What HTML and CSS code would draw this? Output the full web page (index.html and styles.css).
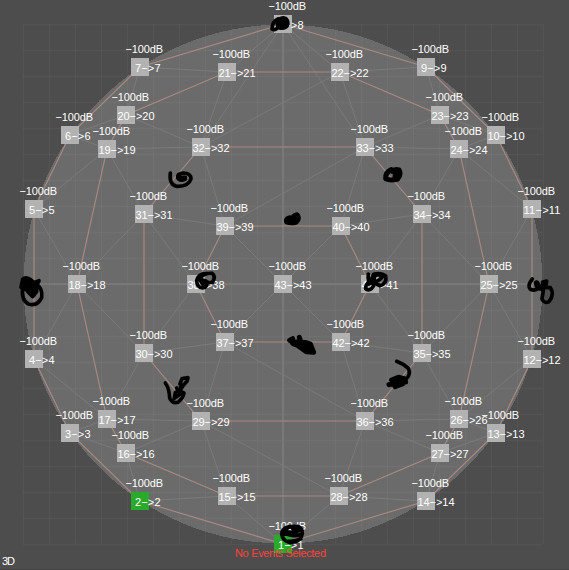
FILE: index.html
```html
<!DOCTYPE html>
<html lang="en">
<head>
<meta charset="utf-8">
<title>Speaker layout</title>
<link rel="stylesheet" href="styles.css">
</head>
<body>
<svg class="stage" width="569" height="570" viewBox="0 0 569 570">
  <circle class="dome" cx="283" cy="284" r="259.5"/>
  <g id="grid" class="grid"></g>
  <path class="axis" d="M283 24V544M23 284H543"/>
  <path id="mesh" class="mesh"/>
  <path id="rings" class="rings"/>
  <g id="nodes"></g>
  <g class="ink">
    <g transform="translate(190 0) scale(.3333)">
      <path d="M264 57Q247 65 246 87Q256 93 266 80Q270 64 259 61"/>
      <path class="solid" d="M265 60Q275 50 287 55Q297 65 292 77Q284 87 270 84Q256 78 265 60Z"/>
    </g>
    <g transform="scale(.3333)">
      <path d="M511 519Q507 555 530 559Q566 560 573 537Q573 519 549 519Q531 521 533 533Q539 545 556 537M540 532L556 532"/>
    </g>
    <g transform="translate(369 0) scale(.3333)">
      <path class="wide" d="M67 509Q49 517 50 536Q65 543 86 537Q98 521 90 510Q76 506 70 514M80 514L78 534L90 520"/>
    </g>
    <g transform="translate(0 190) scale(.3333)">
      <path class="solid" d="M68 268Q77 260 90 268L103 278L117 272L110 287L110 305L98 320L88 310L80 300L63 292Z"/>
      <path d="M69 290Q62 330 85 342Q112 350 125 323Q129 297 111 284"/>
    </g>
    <g transform="translate(190 190) scale(.3333)">
      <path class="wide" d="M300 83Q286 86 290 96Q303 101 319 96Q330 83 321 74Q308 77 308 89Q314 93 319 86"/>
      <path d="M52 251Q25 249 20 273Q21 293 38 294Q55 291 49 274L35 269Q47 281 67 277Q79 260 66 250Q42 248 28 267L39 284"/>
      <path d="M535 252Q532 276 544 277Q568 274 577 260Q563 249 553 260Q548 279 570 287Q592 281 587 258Q574 247 551 253L543 270Q526 282 527 296Q541 306 551 287Q550 276 536 282"/>
      <path class="wide" d="M299 451L308 446Q300 462 321 465L349 485L371 487L361 462Q342 455 331 458L354 474L365 475M328 442L333 456L312 455M323 464L351 479"/>
    </g>
    <g transform="translate(369 190) scale(.3333)">
      <path d="M490 267Q474 287 484 298Q503 305 510 289Q506 272 500 278Q501 296 518 298Q533 292 533 273L521 276L520 293L544 293Q558 313 540 335Q526 342 519 327L523 302"/>
      <path d="M83 514Q104 522 118 535Q127 552 111 568"/>
      <path class="wide" d="M68 570L88 562L106 566M60 584L88 576L110 576M78 590L100 582"/>
    </g>
    <g transform="translate(0 380) scale(.3333)">
      <path d="M496 9Q508 25 509 54Q517 72 534 67Q550 53 552 39L539 34L550 16L561 4L564 -7L546 -4L540 12L544 24L526 38L523 55L540 43L530 24"/>
    </g>
    <g transform="translate(190 380) scale(.3333)">
      <path d="M315 439Q278 438 275 462Q278 484 302 488Q334 486 337 461Q337 437 314 438Q288 440 287 454Q306 463 326 452Q328 444 308 446M276 463L290 462Q316 472 336 462M333 476Q312 486 294 484"/>
    </g>
  </g>
  <text class="warning" x="235" y="557" textLength="91">No Events Selected</text>
  <text class="label" x="2" y="565" textLength="13">3D</text>
  <path class="edge" d="M0 569.5H569"/>
</svg>
<script src="script.js"></script>
</body>
</html>
```
FILE: styles.css
```css
body {
  margin: 0;
  background: #4d4d4d;
  overflow: hidden;
}

.stage {
  display: block;
  font: 11px "Liberation Sans", Arial, sans-serif;
}

.dome {
  fill: #6b6b6b;
  shape-rendering: crispEdges;
}

.grid {
  stroke: #fff;
  stroke-opacity: .035;
  stroke-width: 1.3;
}

.axis {
  stroke: #7b7b7b;
  stroke-width: 1.7;
}

.mesh {
  fill: none;
  stroke: #7c7c7c;
  stroke-width: .9;
}

.rings {
  fill: none;
  stroke: #a98a80;
  stroke-width: 1.15;
}

.node {
  fill: #b2b2b2;
  shape-rendering: crispEdges;
}

.node.active {
  fill: #2aaa2a;
}

.label {
  fill: #fff;
}

.warning {
  fill: #ff4338;
}

.ink {
  fill: none;
  stroke: #000;
  stroke-width: 11;
  stroke-linecap: round;
  stroke-linejoin: round;
}

.ink .wide {
  stroke-width: 15;
}

.ink .solid {
  fill: #000;
}

.edge {
  stroke: #444;
}
```
FILE: script.js
```javascript
// Speaker positions, indexed by channel number minus one.
const speakers = [
  [283,544],[140,501],[70,433],[34,359],[34,209],[70,135],[140,67],[283,24],
  [426,67],[496,135],[532,209],[532,359],[496,433],[426,501],
  [227,496],[126,453],[107,419],[77,284],[107,149],[126,115],[227,72],
  [340,72],[440,115],[459,149],[489,284],[459,419],[440,453],[339,496],
  [201,421],[144,353],[144,214],[201,147],[365,147],[422,214],[422,353],[365,421],
  [225,342],[196,284],[225,226],[341,226],[370,284],[341,342],[283,284]
];
const rings = [[1,14],[15,28],[29,36],[37,42]];
const mesh = `8-21 8-22 8-32 8-33 7-21 9-22 7-20 9-23 6-20 10-23 6-19 10-24
  20-32 23-33 19-32 24-33 21-32 22-33 22-32 5-19 11-24 19-31 24-34 5-18 11-25
  18-31 25-34 18-30 25-35 4-18 12-25 31-39 34-40 31-38 34-41 30-38 35-41
  30-37 35-42 32-39 33-39 33-40 39-43 40-43 37-43 42-43 29-37 36-37 36-42
  28-29 15-29 28-36 1-15 1-28 2-15 14-28 2-16 14-27 3-16 13-27 3-17 13-26
  17-29 26-36 16-29 27-36 17-30 26-35 4-17 12-26`;

const svg = (name, attrs, text) => {
  const el = document.createElementNS("http://www.w3.org/2000/svg", name);
  for (const key in attrs) el.setAttribute(key, attrs[key]);
  if (text) el.textContent = text;
  return el;
};
const at = n => speakers[n - 1].join(" ");

const grid = document.getElementById("grid");
for (let i = 0; i <= 20; i++) {
  grid.append(svg("path", { d: `M${23.5 + i * 26} 24V544M23 ${24.5 + i * 26}H543` }));
}

document.getElementById("mesh").setAttribute("d",
  mesh.trim().split(/\s+/).map(pair => {
    const [a, b] = pair.split("-");
    return `M${at(a)}L${at(b)}`;
  }).join(""));

document.getElementById("rings").setAttribute("d",
  rings.map(([first, last]) => {
    let d = `M${at(first)}`;
    for (let n = first + 1; n <= last; n++) d += `L${at(n)}`;
    return d + "Z";
  }).join(""));

const nodes = document.getElementById("nodes");
speakers.forEach(([x, y], i) => {
  const n = i + 1;
  nodes.append(svg("rect", {
    class: n <= 2 ? "node active" : "node", x: x - 9, y: y - 9, width: 18, height: 18
  }));
});
speakers.forEach(([x, y], i) => {
  const n = i + 1;
  nodes.append(
    svg("text", { class: "label", x: x - 14.5, y: y - 14, textLength: 37.5 }, "\u2212100dB"),
    svg("text", {
      class: "label", x: n < 10 ? x - 5 : x - 8.5, y: y + 5, textLength: n < 10 ? 25.5 : 37
    }, `${n}\u2212>${n}`)
  );
});
```
